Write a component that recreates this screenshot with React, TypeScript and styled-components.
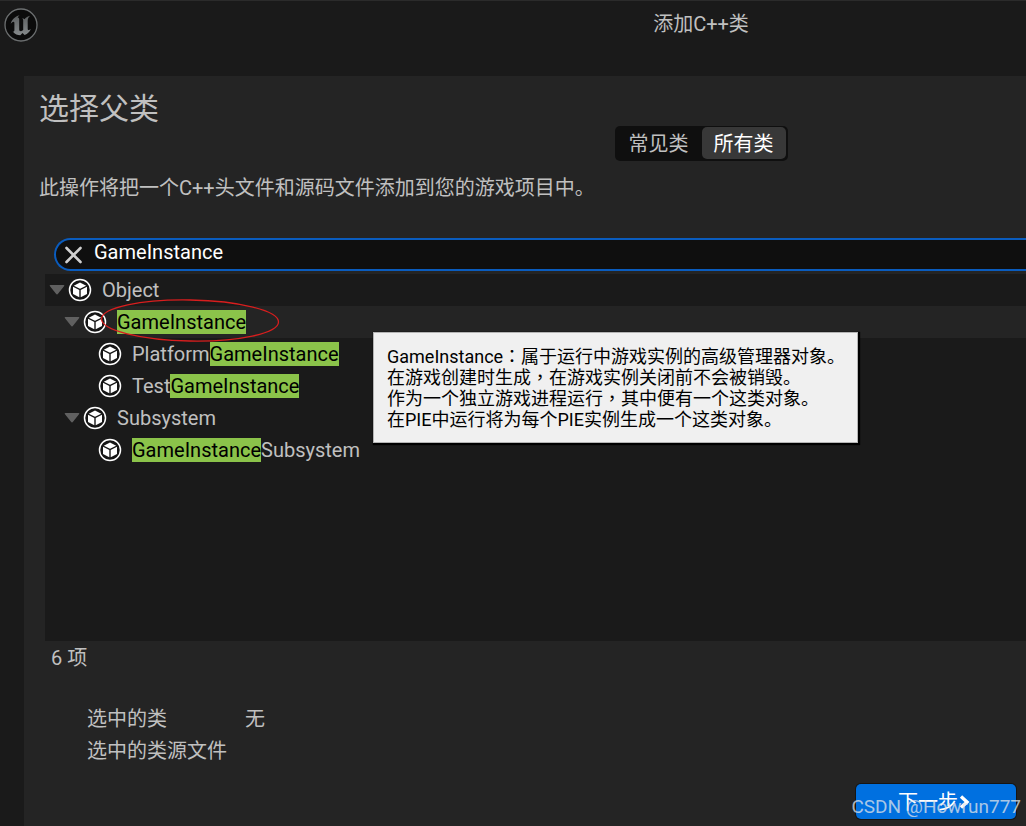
import React, { useState } from "react";
import styled, { createGlobalStyle } from "styled-components";

const GlobalStyle = createGlobalStyle`
  * { box-sizing: border-box; }
  body {
    margin: 0;
    background: #1a1a1a;
    color: #c0c0c0;
    font-family: Roboto, "Noto Sans CJK SC", sans-serif;
    font-size: 20px;
    line-height: 24px;
  }
  button, input { font: inherit; color: inherit; }
`;

const Window = styled.div`
  display: flex;
  flex-direction: column;
  min-height: 100vh;
  overflow: hidden;
  border-top: 1px solid #2b2b2b;
`;

const TitleBar = styled.header`
  display: grid;
  grid-template-columns: 376px 1fr;
  height: 75px;
  padding: 7px 0 0 4px;
`;

const WindowTitle = styled.div`
  padding-top: 4px;
  margin-left: -4px;
  text-align: center;
`;

const Panel = styled.main`
  display: flex;
  flex-direction: column;
  flex: 1;
  margin-left: 24px;
  padding: 16px 0 7px;
  background: #242424;
`;

const Heading = styled.h1`
  margin: 0;
  padding-left: 15px;
  font-size: 30px;
  font-weight: 400;
  line-height: 34px;
`;

const TabRow = styled.div`
  display: flex;
  justify-content: center;
  padding-left: 352px;
`;

const Tabs = styled.div`
  display: flex;
  gap: 1px;
  height: 35px;
  padding: 1px 2px 2px;
  border-radius: 5px;
  background: #0f0f0f;
`;

const Tab = styled.button<{ $active: boolean }>`
  padding: 2px 12px 0;
  border: 0;
  border-radius: 5px;
  background: ${(p) => (p.$active ? "#383838" : "transparent")};
  color: ${(p) => (p.$active ? "#ffffff" : "#c0c0c0")};
`;

const Description = styled.p`
  margin: 15px 0 38px;
  padding-left: 15px;
`;

const SearchBox = styled.div`
  display: flex;
  align-items: center;
  height: 33px;
  margin-left: 30px;
  padding-left: 8px;
  border: 2px solid #0a5cbe;
  border-right: 0;
  border-radius: 17px 0 0 17px;
  background: #0f0f0f;
`;

const ClearButton = styled.button`
  display: flex;
  padding: 0;
  border: 0;
  background: transparent;
`;

const SearchInput = styled.input`
  flex: 1;
  min-width: 0;
  height: 24px;
  margin: 0 0 6px 12px;
  padding: 0;
  border: 0;
  outline: 0;
  background: transparent;
  color: #ffffff;
`;

const Tree = styled.ul`
  position: relative;
  flex: 1;
  min-height: 240px;
  margin: 3px 0 5px 21px;
  padding: 0;
  list-style: none;
  background: #1a1a1a;
`;

const TreeRow = styled.li<{ $level: number; $selected?: boolean }>`
  display: flex;
  align-items: center;
  height: 32px;
  padding-left: ${(p) => 4 + p.$level * 15}px;
  background: ${(p) => (p.$selected ? "#242424" : "transparent")};
`;

const ArrowSlot = styled.span`
  display: flex;
  width: 19px;
`;

const ClassName = styled.span`
  margin-left: 10px;
  white-space: nowrap;
`;

const Match = styled.mark`
  background: #8bc34a;
  color: #000000;
`;

const Annotation = styled.svg`
  position: absolute;
  left: 55px;
  top: 24px;
  pointer-events: none;
`;

const Tooltip = styled.div`
  position: absolute;
  left: 328px;
  top: 58px;
  padding: 13px 12px 12px 13px;
  border: 1px solid #b4b4b4;
  background: #f0f0f0;
  box-shadow: 1px 1px 1px 1px #000000;
  color: #000000;
  font-size: 18px;
  line-height: 21px;
  white-space: nowrap;
`;

const Punctuation = styled.span`
  font-family: "Noto Sans CJK TC", sans-serif;
  line-height: 1;
`;

const Status = styled.div`
  padding-left: 27px;
`;

const Details = styled.dl`
  display: grid;
  grid-template-columns: 158px 1fr;
  grid-auto-rows: 32px;
  align-items: center;
  margin: 33px 0 17px;
  padding-left: 63px;
`;

const Value = styled.dd`
  margin: 0;
`;

const Footer = styled.footer`
  position: relative;
  display: flex;
  justify-content: flex-end;
  padding-right: 10px;
`;

const NextButton = styled.button`
  display: flex;
  align-items: center;
  justify-content: center;
  width: 160px;
  height: 35px;
  padding: 0 4px 0 0;
  border: 0;
  border-radius: 5px;
  background: #0070e0;
  box-shadow: 0 0 0 1px #151515;
  color: #ffffff;
`;

const Watermark = styled.span`
  position: absolute;
  right: 5px;
  bottom: 0;
  color: rgba(225, 228, 232, 0.75);
  font-size: 19px;
  white-space: nowrap;
`;

const Logo = () => (
  <svg width="34" height="34" viewBox="0 0 34 34" aria-label="Unreal Engine">
    <defs>
      <linearGradient id="metal" x1="0" y1="0" x2="0" y2="1">
        <stop offset="0" stopColor="#5c5f60" />
        <stop offset="1" stopColor="#85898b" />
      </linearGradient>
    </defs>
    <circle cx="17" cy="17" r="16" fill="#0b0b0b" stroke="#6c6f70" strokeWidth="1.3" />
    <path
      d="M15.5 7.2C11 8.6 7.5 11.8 6.7 15.8c1.2-1.5 2.6-2.4 3.3-1.9.4.3.4.8.4 1.5v6.7c0 1.3-.6 1.7-1.7 1.5 2.1 3 5.1 3.5 7.6 3.7l2.2-2.2 2.1 1.9c3.2-1.3 5.2-3.4 6.2-6.1-1 .9-2.1 1.4-2.7 1-.3-.2-.4-.6-.4-1.1V12.4c0-1.6 1.2-3.5 2.4-4.6-2 .5-4.3 1.9-5.6 3.4-.6-.7-1.4-1-2.3-1 .7.5 1 1.2 1 2.2v9.7c-.7.7-1.5 1.1-2.3 1.1-1.2 0-1.7-.6-1.7-1.7v-10c0-1.7-.9-2-1.7-1.4.3-1 1.1-2.1 2-2.9z"
      fill="url(#metal)"
    />
  </svg>
);

const Arrow = () => (
  <svg width="16" height="10" viewBox="0 0 16 10" aria-hidden="true">
    <path d="M1.5 0h13q1.5 0 .5 1.2L9 8.8Q8 10 7 8.8L1 1.2Q0 0 1.5 0z" fill="#606060" />
  </svg>
);

const ClassIcon = () => (
  <svg width="24" height="24" viewBox="0 0 24 24" aria-hidden="true">
    <circle cx="12" cy="12" r="10.5" fill="#151515" stroke="#ffffff" strokeWidth="1.5" />
    <path d="M12 4.5 18.2 7.7 12 10.8 5.8 7.7z" fill="#ffffff" />
    <path d="M5 8.8 11.3 12v7.3L5 16z" fill="#ffffff" />
    <path d="M19 8.8 12.7 12v7.3L19 16z" fill="#ffffff" />
  </svg>
);

const ClearIcon = () => (
  <svg width="18" height="18" viewBox="0 0 18 18" aria-hidden="true">
    <path d="M2.500 2l14 14M16.500 2l-14 14" stroke="#d0d0d0" strokeWidth="2.6" strokeLinecap="round" />
  </svg>
);

const Chevron = () => (
  <svg width="12" height="14" viewBox="0 0 12 14" aria-hidden="true">
    <path d="M3 1.5l6 5.5-6 5.5" fill="none" stroke="#ffffff" strokeWidth="3.4" />
  </svg>
);

interface ClassNode {
  name: string;
  level: number;
  open?: boolean;
}

const classes: ClassNode[] = [
  { name: "Object", level: 0, open: true },
  { name: "GameInstance", level: 1, open: true },
  { name: "PlatformGameInstance", level: 2 },
  { name: "TestGameInstance", level: 2 },
  { name: "Subsystem", level: 1, open: true },
  { name: "GameInstanceSubsystem", level: 2 },
];

const Highlighted = ({ text, query }: { text: string; query: string }) => {
  const at = query ? text.indexOf(query) : -1;
  if (at < 0) return <>{text}</>;
  return (
    <>
      {text.slice(0, at)}
      <Match>{query}</Match>
      {text.slice(at + query.length)}
    </>
  );
};

export default function App() {
  const [query, setQuery] = useState("GameInstance");
  const [tab, setTab] = useState("所有类");

  return (
    <>
      <GlobalStyle />
      <Window>
        <TitleBar>
          <Logo />
          <WindowTitle>添加C++类</WindowTitle>
        </TitleBar>
        <Panel>
          <Heading>选择父类</Heading>
          <TabRow>
            <Tabs role="tablist">
              {["常见类", "所有类"].map((name) => (
                <Tab
                  key={name}
                  type="button"
                  role="tab"
                  aria-selected={tab === name}
                  $active={tab === name}
                  onClick={() => setTab(name)}
                >
                  {name}
                </Tab>
              ))}
            </Tabs>
          </TabRow>
          <Description>此操作将把一个C++头文件和源码文件添加到您的游戏项目中。</Description>
          <SearchBox>
            <ClearButton type="button" aria-label="清除" onClick={() => setQuery("")}>
              <ClearIcon />
            </ClearButton>
            <SearchInput
              aria-label="搜索"
              value={query}
              onChange={(e) => setQuery(e.target.value)}
            />
          </SearchBox>
          <Tree role="tree">
            {classes.map((c) => (
              <TreeRow
                key={c.name}
                role="treeitem"
                aria-level={c.level + 1}
                $level={c.level}
                $selected={c.name === "GameInstance"}
              >
                <ArrowSlot>{c.open && <Arrow />}</ArrowSlot>
                <ClassIcon />
                <ClassName>
                  <Highlighted text={c.name} query={query} />
                </ClassName>
              </TreeRow>
            ))}
            <Annotation width="180" height="46" viewBox="0 0 180 46" aria-hidden="true">
              <ellipse
                cx="90"
                cy="22.5"
                rx="88.5"
                ry="20.5"
                fill="none"
                stroke="#d81e1e"
                strokeWidth="1.3"
                transform="rotate(1 90 23)"
              />
            </Annotation>
            <Tooltip role="tooltip">
              GameInstance<Punctuation>：</Punctuation>属于运行中游戏实例的高级管理器对象。
              <br />
              在游戏创建时生成<Punctuation>，</Punctuation>在游戏实例关闭前不会被销毁。
              <br />
              作为一个独立游戏进程运行<Punctuation>，</Punctuation>其中便有一个这类对象。
              <br />
              在PIE中运行将为每个PIE实例生成一个这类对象。
            </Tooltip>
          </Tree>
          <Status>6 项</Status>
          <Details>
            <dt>选中的类</dt>
            <Value>无</Value>
            <dt>选中的类源文件</dt>
          </Details>
          <Footer>
            <NextButton type="button">
              下一步
              <Chevron />
            </NextButton>
            <Watermark>CSDN @Howrun777</Watermark>
          </Footer>
        </Panel>
      </Window>
    </>
  );
}
